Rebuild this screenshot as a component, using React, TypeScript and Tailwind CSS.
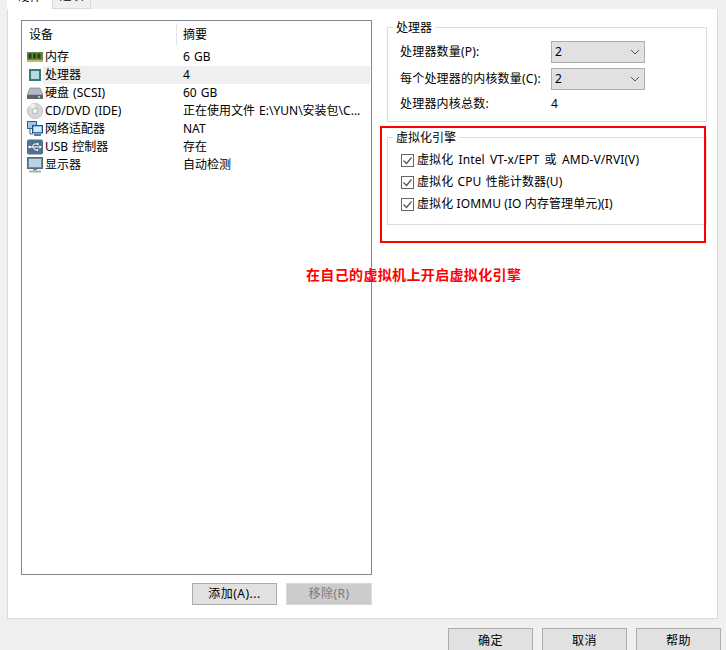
import React from 'react';

const font = "font-['Noto_Sans','Noto_Sans_CJK_SC',sans-serif]";

const MemoryIcon = () => (
  <svg width="16" height="16" viewBox="0 0 16 16">
    <rect x="0" y="3" width="16" height="8" fill="#5f8f3a" />
    <rect x="0" y="11" width="16" height="2" fill="#c9b866" />
    <rect x="1.5" y="4.5" width="3" height="5" fill="#2e3a25" />
    <rect x="6" y="4.5" width="3" height="5" fill="#2e3a25" />
    <rect x="10.5" y="4.5" width="3" height="5" fill="#2e3a25" />
  </svg>
);

const CpuIcon = () => (
  <svg width="16" height="16" viewBox="0 0 16 16">
    <rect x="2" y="2" width="12" height="12" fill="#2f7f7a" />
    <rect x="4" y="4" width="8" height="8" fill="#bcd8dc" />
  </svg>
);

const DiskIcon = () => (
  <svg width="16" height="16" viewBox="0 0 16 16">
    <path d="M3 3h10l3 7H0z" fill="#b4bac2" stroke="#6d747c" strokeWidth="0.6" />
    <rect x="0" y="10" width="16" height="4" fill="#5d646c" />
    <rect x="11" y="11" width="2" height="2" fill="#8fe08a" />
  </svg>
);

const DiscIcon = () => (
  <svg width="16" height="16" viewBox="0 0 16 16">
    <circle cx="8" cy="8" r="7.6" fill="#d6d8da" stroke="#a4a8ac" strokeWidth="0.6" />
    <path d="M8 8 L2 3 A7.6 7.6 0 0 1 8 0.5z" fill="#f0f1f2" />
    <circle cx="8" cy="8" r="2.8" fill="#eeeeee" stroke="#9a9ea2" strokeWidth="0.6" />
    <circle cx="8" cy="8" r="1" fill="#ffffff" />
  </svg>
);

const NetworkIcon = () => (
  <svg width="16" height="16" viewBox="0 0 16 16">
    <rect x="0.5" y="0.5" width="9" height="7" fill="#9fc4e6" stroke="#2f5f8f" />
    <path d="M3 8v5h3" fill="none" stroke="#2f5f8f" />
    <rect x="5.5" y="4.5" width="10" height="7.5" fill="#3d8fe0" stroke="#24527f" />
    <rect x="6.5" y="5.5" width="8" height="5.5" fill="#d4ecff" />
    <rect x="7" y="13" width="7" height="2" fill="#5d7a96" />
  </svg>
);

const UsbIcon = () => (
  <svg width="16" height="16" viewBox="0 0 16 16">
    <rect x="0" y="0.5" width="16" height="15" rx="2" fill="#50708f" />
    <path d="M2 8h11M5 8l2-3h2.5M6 8l2 3h1.5" fill="none" stroke="#ffffff" strokeWidth="1" />
    <circle cx="2.5" cy="8" r="1.2" fill="#ffffff" />
    <path d="M12.5 6.3L15 8l-2.5 1.7z" fill="#ffffff" />
    <rect x="9.5" y="4" width="2" height="2" fill="#ffffff" />
    <circle cx="10.3" cy="11" r="1" fill="#ffffff" />
  </svg>
);

const MonitorIcon = () => (
  <svg width="16" height="16" viewBox="0 0 16 16">
    <rect x="0.5" y="0.5" width="15" height="11" fill="#7a8794" stroke="#5a6672" />
    <rect x="2" y="2" width="12" height="8" fill="#b9d3e8" />
    <rect x="6" y="12" width="4" height="1.5" fill="#7f8a95" />
    <rect x="2" y="13.5" width="12" height="2" fill="#a8b0b8" />
  </svg>
);

const devices = [
  { icon: <MemoryIcon />, name: '内存', summary: '6 GB' },
  { icon: <CpuIcon />, name: '处理器', summary: '4', selected: true },
  { icon: <DiskIcon />, name: '硬盘 (SCSI)', summary: '60 GB' },
  { icon: <DiscIcon />, name: 'CD/DVD (IDE)', summary: '正在使用文件 E:\\YUN\\安装包\\C...' },
  { icon: <NetworkIcon />, name: '网络适配器', summary: 'NAT' },
  { icon: <UsbIcon />, name: 'USB 控制器', summary: '存在' },
  { icon: <MonitorIcon />, name: '显示器', summary: '自动检测' },
];

const Btn: React.FC<{ label: string; disabled?: boolean; className?: string }> = ({ label, disabled, className }) => (
  <div
    className={`flex w-[85px] items-center justify-center border text-[12px] tracking-[0.5px] ${
      disabled ? 'border-[#d9d9d9] bg-[#cccccc] text-[#7a7a7a]' : 'border-[#adadad] bg-[#e1e1e1] text-black'
    } ${className ?? ''}`}
  >
    {label}
  </div>
);

const Select: React.FC<{ value: string }> = ({ value }) => (
  <div className="flex h-[22px] w-[94px] items-center justify-between border border-[#adadad] bg-[#e1e1e1] pl-[3px] pr-[4px] text-[12px]">
    <span>{value}</span>
    <svg width="10" height="6" viewBox="0 0 10 6">
      <path d="M1 1l4 4 4-4" fill="none" stroke="#555555" strokeWidth="1" />
    </svg>
  </div>
);

const Check: React.FC<{ label: string; className: string }> = ({ label, className }) => (
  <div className={`flex h-[22px] items-center gap-[3px] whitespace-nowrap text-[12px] tracking-[0.1px] ${className}`}>
    <svg width="13" height="13" viewBox="0 0 13 13">
      <rect x="0.5" y="0.5" width="12" height="12" fill="#ffffff" stroke="#666666" />
      <path d="M2.5 6.5l3 3 5-6" fill="none" stroke="#555555" strokeWidth="1.2" />
    </svg>
    <span>{label}</span>
  </div>
);

const Group: React.FC<{ title: string; className: string; children: React.ReactNode }> = ({ title, className, children }) => (
  <div className={`relative w-[320px] border border-[#dcdcdc] ${className}`}>
    <span className="absolute left-[5px] top-[-8px] bg-white px-[3px] text-[12px] leading-[16px]">{title}</span>
    {children}
  </div>
);

export default function App() {
  return (
    <div className={`relative h-[650px] w-[726px] overflow-hidden bg-[#f0f0f0] text-black ${font}`}>
      {/* tabs, cut off by the top of the picture */}
      <div className="ml-[7px] flex h-[9px] items-end text-[12px] leading-[16px]">
        <div className="flex h-[9px] w-[46px] items-end justify-center border-r border-[#d9d9d9] bg-white">
          <span className="mb-[4px] block">硬件</span>
        </div>
        <div className="flex h-[9px] w-[38px] items-end justify-center border-r border-b border-[#d9d9d9]">
          <span className="mb-[4px] block">选项</span>
        </div>
      </div>

      <div className="ml-[7px] flex h-[610px] w-[711px] border border-t-0 border-[#d9d9d9] bg-white">
        <div className="ml-[13px] mt-[11px] flex w-[351px] flex-col">
          <div className="h-[555px] border border-[#82878f] bg-white text-[12px] [word-spacing:1px]">
            <div className="flex h-[27px] items-center">
              <span className="ml-[7px] w-[147px]">设备</span>
              <span className="h-[23px] border-l border-[#e5e5e5]" />
              <span className="ml-[6px]">摘要</span>
            </div>
            {devices.map((d) => (
              <div key={d.name} className="flex h-[18px] items-center whitespace-nowrap leading-[18px]">
                <span className="ml-[5px] flex w-[16px] justify-center">{d.icon}</span>
                <div className={`flex h-[18px] w-[327px] items-center ${d.selected ? 'bg-[#efefef]' : ''}`}>
                  <span className="ml-[2px] w-[138px]">{d.name}</span>
                  <span>{d.summary}</span>
                </div>
              </div>
            ))}
          </div>
          <div className="mt-[8px] flex h-[22px] justify-end gap-[9px]">
            <Btn label="添加(A)..." />
            <Btn label="移除(R)" disabled className="w-[86px]" />
          </div>
        </div>

        <div className="ml-[15px] flex flex-col pt-[18px]">
          <Group title="处理器" className="h-[95px]">
            <div className="grid grid-cols-[151px_94px] items-center gap-y-[5px] pl-[12px] pt-[13px] text-[12px] tracking-[0.2px]">
              <span>处理器数量(P):</span>
              <Select value="2" />
              <span>每个处理器的内核数量(C):</span>
              <Select value="2" />
              <span>处理器内核总数:</span>
              <span>4</span>
            </div>
          </Group>
          <Group title="虚拟化引擎" className="mt-[15px] h-[88px]">
            <div className="pl-[13px] pt-[11px]">
              <Check label="虚拟化 Intel VT-x/EPT 或 AMD-V/RVI(V)" className="[word-spacing:2px]" />
              <Check label="虚拟化 CPU 性能计数器(U)" className="[word-spacing:1px]" />
              <Check label="虚拟化 IOMMU (IO 内存管理单元)(I)" className="[word-spacing:0px]" />
            </div>
          </Group>
        </div>
      </div>

      <div className="mr-[5px] mt-[9px] flex justify-end gap-[9px]">
        <Btn label="确定" className="h-[24px] pt-[1px]" />
        <Btn label="取消" className="h-[24px] pt-[1px]" />
        <Btn label="帮助" className="h-[24px] pt-[1px]" />
      </div>

      {/* red annotation drawn over the dialog */}
      <div className="absolute left-[380px] top-[126px] h-[117px] w-[326px] border-2 border-[#ff0000]" />
      <div className="absolute left-[306px] top-[266px] text-[14px] font-bold leading-[18px] tracking-[0.35px] text-[#ff0000]">
        在自己的虚拟机上开启虚拟化引擎
      </div>
    </div>
  );
}
